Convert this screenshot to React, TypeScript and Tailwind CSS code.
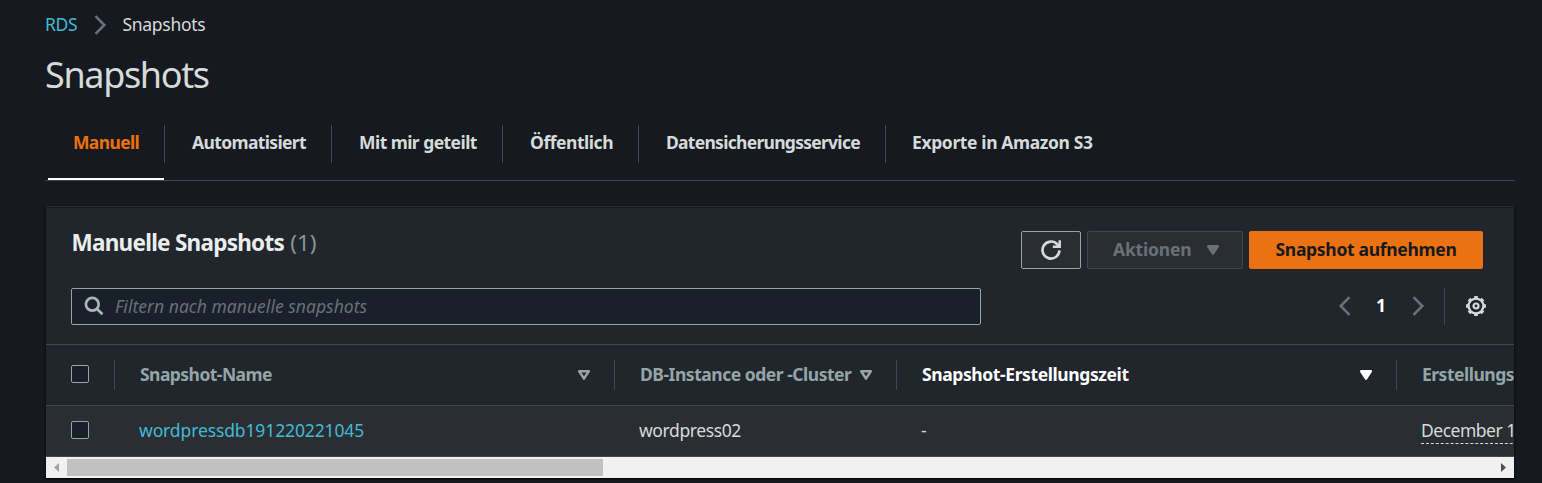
import type { ReactNode } from 'react';

function Chevron({ dir, className }: { dir: 'left' | 'right'; className: string }) {
  return (
    <svg viewBox="0 0 13 20" className={className} fill="none" stroke="currentColor" strokeWidth="2.6">
      <path d={dir === 'right' ? 'M1.5 1.2L10.3 10L1.5 18.8' : 'M11.5 1.2L2.7 10L11.5 18.8'} />
    </svg>
  );
}

function Caret({ filled, className }: { filled?: boolean; className: string }) {
  return (
    <svg viewBox="0 0 14 12" className={className} stroke="currentColor" strokeWidth="2.5" strokeLinejoin="round">
      <path d="M2.2 2.2H11.8L7 9.6Z" fill={filled ? 'currentColor' : 'none'} />
    </svg>
  );
}

function Refresh() {
  return (
    <svg viewBox="0 0 20 20" className="h-5 w-5" fill="none" stroke="currentColor" strokeWidth="2.7">
      <path d="M18.5 10.4A8.5 8.5 0 1 1 16.3 4.3L18 6.4" />
      <path d="M11.8 6.8H18.7V0.2" strokeWidth="2.5" />
    </svg>
  );
}

function Gear() {
  return (
    <svg viewBox="0 0 20 20" className="h-5 w-5" fill="none" stroke="currentColor">
      <circle cx="10" cy="10" r="7.4" strokeWidth="2.3" />
      <circle cx="10" cy="10" r="8.9" strokeWidth="2" pathLength="16" strokeDasharray="1.1 0.9" strokeDashoffset="0.55" />
      <circle cx="10" cy="10" r="2.5" strokeWidth="2.2" />
    </svg>
  );
}

function Search() {
  return (
    <svg viewBox="0 0 20 20" className="h-5 w-5" fill="none" stroke="currentColor" strokeWidth="2.7">
      <circle cx="8.3" cy="8.3" r="6.4" />
      <path d="M12.8 12.8L18.5 18.3" />
    </svg>
  );
}

function Checkbox() {
  return <span className="block h-[18px] w-[18px] rounded-[2px] border border-[#95a5a6] bg-[#1a2029]" />;
}

const tabs = [
  { label: 'Manuell', cls: 'w-[117px] pl-[25px] tracking-[-0.65px] text-[#ec7211]', active: true },
  { label: 'Automatisiert', cls: 'w-[167px] pl-[27px] tracking-[-0.64px]' },
  { label: 'Mit mir geteilt', cls: 'w-[171px] pl-[27px] tracking-[-0.55px]' },
  { label: 'Öffentlich', cls: 'w-[136px] pl-[27px] tracking-[-0.46px]' },
  { label: 'Datensicherungsservice', cls: 'w-[247px] pl-[27px] tracking-[-0.72px]' },
  { label: 'Exporte in Amazon S3', cls: 'w-[220px] pl-[26px] tracking-[-0.38px]', last: true },
];

function HeadCell({ className, icon, children }: { className: string; icon?: ReactNode; children: ReactNode }) {
  return (
    <div className={`flex h-[30px] shrink-0 items-center justify-between border-l border-[#414750] pl-[25px] whitespace-nowrap ${className}`}>
      <span className="pb-0.5">{children}</span>
      {icon}
    </div>
  );
}

export default function App() {
  return (
    <div className="h-[483px] overflow-hidden bg-[#16191f] pl-[45px] font-['Noto_Sans',sans-serif] text-[17.5px] leading-6 text-[#d5dbdb]">
      <nav className="mb-0.5 flex h-[47px] items-center pt-0.5">
        <a className="w-[49px] pb-0.5 tracking-[-0.3px] text-[#44b9d6]">RDS</a>
        <Chevron dir="right" className="mr-[15.5px] h-5 w-[13px] text-[#687078]" />
        <span className="pb-0.5 tracking-[-0.3px]">Snapshots</span>
      </nav>
      <h1 className="h-[76px] pt-0.5 text-[36px] leading-[48px] tracking-[-1.35px]">Snapshots</h1>

      <div className="flex h-14 w-[1470px] border-b border-[#414750] pl-[3px]">
        {tabs.map((t) => (
          <div key={t.label} className="flex h-[55px] flex-col justify-between">
            <div className={`h-[38px] border-[#414750] leading-[34px] font-bold whitespace-nowrap ${t.last ? '' : 'border-r'} ${t.cls}`}>{t.label}</div>
            {t.active && <div className="mr-px h-0.5 bg-white" />}
          </div>
        ))}
      </div>

      <section className="mt-[25px] ml-px h-[272px] w-[1468px] overflow-hidden border-t border-[#2a2e33] bg-[#21252c] shadow-[0_1px_2px_#000]">
        <div className="flex h-[81px] justify-between border-t border-[#16191f] pr-[31px] pl-[25.5px]">
          <h2 className="pt-[19px] text-[22.5px] leading-8 font-bold tracking-[-0.74px] text-[#eaeded]">
            Manuelle Snapshots <span className="ml-px font-normal tracking-normal text-[#879596]">(1)</span>
          </h2>
          <div className="flex gap-1.5 pt-[23px] font-bold">
            <button className="flex h-[38px] w-[60px] items-center justify-center rounded-[2px] border border-[#95a5a6] bg-[#2a2e33]"><Refresh /></button>
            <button className="flex h-[38px] w-[156px] items-center rounded-[2px] border border-[#414750] bg-[#2a2e33] pl-[25px] text-[#687078]">
              <span className="w-[93px] pb-0.5 text-left tracking-[-0.2px]">Aktionen</span>
              <Caret filled className="h-3 w-3.5" />
            </button>
            <button className="h-[38px] w-[234px] rounded-[2px] bg-[#ec7211] pb-0.5 tracking-[-0.31px] text-[#16191f]">Snapshot aufnehmen</button>
          </div>
        </div>

        <div className="flex h-14 items-start pl-[25px]">
          <div className="flex h-[37px] w-[910px] items-center rounded-[2px] border border-[#95a5a6] bg-[#1a2029] pb-px pl-3">
            <span className="text-[#aab7b8]"><Search /></span>
            <span className="pb-px pl-[11px] tracking-[0.02px] text-[#687078] italic">Filtern nach manuelle snapshots</span>
          </div>
          <div className="ml-[357px] flex h-[37px] items-center">
            <Chevron dir="left" className="mb-px h-5 w-[13px] text-[#687078]" />
            <span className="w-[61px] pr-px pb-[3px] text-center font-bold text-white">1</span>
            <Chevron dir="right" className="mb-px h-5 w-[13px] text-[#687078]" />
            <span className="ml-[19px] h-[37px] w-[22px] border-l border-[#414750]" />
            <span className="pb-px"><Gear /></span>
          </div>
        </div>

        <div className="flex h-[62px] items-center border-y border-[#414750] font-bold text-[#95a5a6]">
          <div className="w-[68px] shrink-0 pb-[3px] pl-[25px]"><Checkbox /></div>
          <HeadCell className="w-[500px] pr-[23px] tracking-[-0.55px]" icon={<Caret className="h-3 w-3.5" />}>Snapshot-Name</HeadCell>
          <HeadCell className="w-[282px] pr-[23px] tracking-[-0.48px]" icon={<Caret className="h-3 w-3.5" />}>DB-Instance oder -Cluster</HeadCell>
          <HeadCell className="w-[500px] pr-[23px] tracking-[-0.4px] text-white" icon={<Caret filled className="h-3 w-3.5" />}>Snapshot-Erstellungszeit</HeadCell>
          <HeadCell className="w-[250px] tracking-[-0.5px]">Erstellungszeit der DB</HeadCell>
        </div>

        <div className="flex h-[51px] items-center border-b border-[#414750] bg-[#2a2e33] whitespace-nowrap">
          <div className="w-[93px] shrink-0 pb-0.5 pl-[25px]"><Checkbox /></div>
          <a className="w-[500px] shrink-0 pb-0.5 tracking-[-0.12px] text-[#44b9d6]">wordpressdb191220221045</a>
          <span className="w-[282px] shrink-0 pb-0.5 tracking-[-0.4px]">wordpress02</span>
          <span className="w-[500px] shrink-0 pb-0.5">-</span>
          <span className="shrink-0 border-b border-dashed border-[#d5dbdb] pb-px tracking-[-0.5px]">December 19, 2022</span>
        </div>

        <div className="flex h-[21px] items-center bg-[#f1f1f1]">
          <svg viewBox="0 0 21 21" className="h-[21px] w-[21px] fill-[#a3a3a3]"><path d="M13 6V15L8 10.5Z" /></svg>
          <div className="h-[17px] w-[536px] bg-[#c1c1c1]" />
          <svg viewBox="0 0 21 21" className="ml-auto h-[21px] w-[21px] fill-[#505050]"><path d="M8 6V15L13 10.5Z" /></svg>
        </div>
      </section>
    </div>
  );
}
